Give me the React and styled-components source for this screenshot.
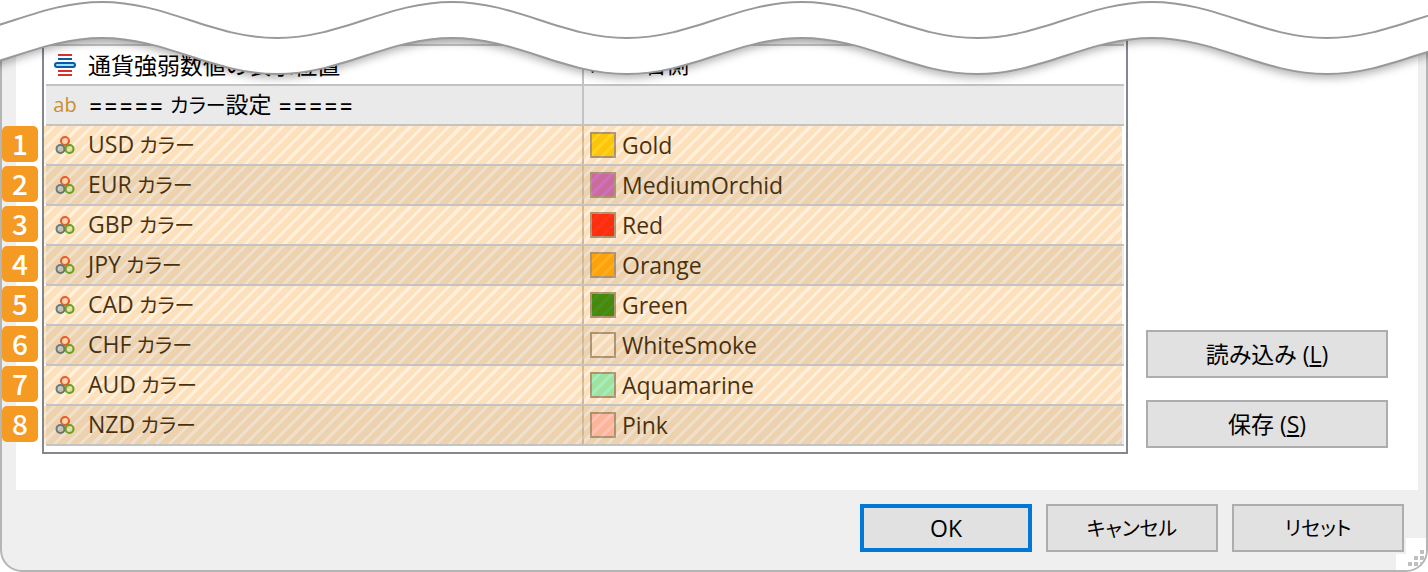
import React from 'react';
import styled, { createGlobalStyle, css } from 'styled-components';

const GlobalStyle = createGlobalStyle`
    *, *::before, *::after {
        box-sizing: border-box;
    }

    body {
        margin: 0;
        background: #fff;
        color: #000;
        font-family: 'Open Sans', 'Noto Sans CJK JP', sans-serif;
        font-size: 23px;
        line-height: 32px;
        font-feature-settings: 'palt';
    }
`;

const Dialog = styled.main`
    position: relative;
    overflow: hidden;
    border: 2px solid #b5b5b5;
    border-top: 0;
    border-radius: 0 0 22px 22px;
    background: #efefef;
`;

const Panel = styled.section`
    display: flex;
    gap: 18px;
    margin: 0 8px 0 14px;
    padding: 0 30px 36px 26px;
    background: #fff;
`;

const ListBox = styled.div`
    flex: 1;
    min-width: 0;
    padding: 0 2px 6px;
    border: 2px solid #828790;
    border-top: 0;
`;

const ListTop = styled.div`
    height: 46px;
    border-bottom: 2px solid #c3c3c3;
    background: #eaeaea;
`;

const Table = styled.table`
    width: 100%;
    table-layout: fixed;
    border-spacing: 0;
`;

const hatch = css`
    &::after {
        content: '';
        position: absolute;
        inset: 0 -2px 0 -2px;
        background: repeating-linear-gradient(
            135deg,
            rgba(245, 154, 35, 0.3) 0 6px,
            rgba(250, 195, 119, 0.26) 6px 9px
        );
        pointer-events: none;
    }

    &:last-child::after {
        inset: 0 2px 0 0;
    }
`;

const Cell = styled.td`
    position: relative;
    height: 40px;
    padding: 0 0 0 6px;
    border-bottom: 2px solid #c3c3c3;
    white-space: nowrap;
`;

const NameCell = styled(Cell)`
    width: 538px;
    border-right: 2px solid #c3c3c3;
`;

const Row = styled.tr`
    background: ${({ $shaded }) => ($shaded ? '#eaeaea' : '#fff')};

    ${Cell} {
        ${({ $marked }) => $marked && hatch}
    }
`;

const CellContent = styled.div`
    display: flex;
    align-items: center;
    gap: ${({ $gap }) => $gap}px;
    height: 38px;
`;

const Badge = styled.span`
    position: absolute;
    top: 0;
    left: -44px;
    z-index: 1;
    width: 36px;
    height: 36px;
    border-radius: 5px;
    background: #f59a23;
    color: #fff;
    font-family: 'Noto Sans CJK JP', sans-serif;
    font-size: 28px;
    font-weight: 500;
    line-height: 34px;
    text-align: center;
`;

const Kana = styled.span`
    font-size: 20px;
`;

const Equals = styled.span`
    font-family: Inter, sans-serif;
`;

const TypeIcon = styled.svg`
    flex: none;
    width: 26px;
    height: 26px;
`;

const TextTypeIcon = styled.span`
    width: 26px;
    color: #c8912e;
    font-size: 20px;
    line-height: 26px;
    text-align: center;
`;

const Swatch = styled.span`
    width: 26px;
    height: 26px;
    border: 2px solid #8e8e8e;
    background: ${({ $color }) => $color};
`;

const Side = styled.div`
    display: flex;
    flex-direction: column;
    justify-content: flex-end;
    gap: 22px;
    width: 242px;
    padding-bottom: 6px;
`;

const Button = styled.button`
    height: 48px;
    padding: 0;
    border: ${({ $primary }) => ($primary ? '4px solid #0078d7' : '2px solid #adadad')};
    background: #e1e1e1;
    color: #000;
    font: inherit;
    font-feature-settings: inherit;
`;

const Footer = styled.footer`
    display: flex;
    justify-content: flex-end;
    gap: 14px;
    padding: 14px 22px 18px;

    ${Button} {
        width: 172px;
    }
`;

const Grip = styled.svg`
    position: absolute;
    right: 0;
    bottom: 0;
    width: 30px;
    height: 32px;
`;

const Wave = styled.svg`
    position: absolute;
    top: 0;
    left: 0;
    z-index: 2;
    width: 100%;
    height: 100px;
    pointer-events: none;
`;

const WaveShadow = styled.g`
    filter: drop-shadow(0 4px 4px rgba(0, 0, 0, 0.3));
`;

const colors = [
    { code: 'USD', name: 'Gold', value: '#ffd700' },
    { code: 'EUR', name: 'MediumOrchid', value: '#ba55d3' },
    { code: 'GBP', name: 'Red', value: '#ff0000' },
    { code: 'JPY', name: 'Orange', value: '#ffa500' },
    { code: 'CAD', name: 'Green', value: '#008000' },
    { code: 'CHF', name: 'WhiteSmoke', value: '#f5f5f5' },
    { code: 'AUD', name: 'Aquamarine', value: '#7fffd4' },
    { code: 'NZD', name: 'Pink', value: '#ffc0cb' },
];

const wavePath = (y) => {
    let d = `M-73 ${y + 36}`;
    for (let x = -73; x < 1500; x += 350) {
        d += ` C${x + 65} ${y + 36} ${x + 110} ${y} ${x + 175} ${y}`;
        d += ` S${x + 285} ${y + 36} ${x + 350} ${y + 36}`;
    }
    return d;
};

const EnumIcon = () => (
    <TypeIcon viewBox="0 0 26 26" aria-hidden="true">
        <path d="M6 3h14M6 19h14M6 23h14" stroke="#d9302c" strokeWidth="2" />
        <path d="M6 7h14" stroke="#0a5aa5" strokeWidth="2" />
        <rect x="3" y="11" width="20" height="4" rx="2" fill="#9be4fb" stroke="#0a5aa5" strokeWidth="2" />
    </TypeIcon>
);

const ColorIcon = () => (
    <TypeIcon viewBox="0 0 26 26" aria-hidden="true">
        <circle cx="13" cy="9" r="4" fill="#fbd9cf" stroke="#e2401f" strokeWidth="2" />
        <circle cx="8.5" cy="17" r="4" fill="#b7cfe2" stroke="#2b6390" strokeWidth="2" />
        <circle cx="17.5" cy="17" r="4" fill="#d3f0c2" stroke="#2f9e1c" strokeWidth="2" />
    </TypeIcon>
);

const ColorRow = ({ index, code, name, value }) => (
    <Row $marked $shaded={index % 2 === 1}>
        <NameCell>
            <Badge>{index + 1}</Badge>
            <CellContent $gap={10}>
                <ColorIcon />
                <span>{code}<Kana> カラー</Kana></span>
            </CellContent>
        </NameCell>
        <Cell>
            <CellContent $gap={6}>
                <Swatch $color={value} />
                {name}
            </CellContent>
        </Cell>
    </Row>
);

const App = () => (
    <>
        <GlobalStyle />
        <Dialog>
            <Panel>
                <ListBox>
                    <ListTop />
                    <Table>
                        <tbody>
                            <Row>
                                <NameCell>
                                    <CellContent $gap={10}>
                                        <EnumIcon />
                                        通貨強弱数値の表示位置
                                    </CellContent>
                                </NameCell>
                                <Cell>
                                    <CellContent $gap={6}>
                                        <span><Kana>メイン</Kana>右側</span>
                                    </CellContent>
                                </Cell>
                            </Row>
                            <Row $shaded>
                                <NameCell>
                                    <CellContent $gap={10}>
                                        <TextTypeIcon>ab</TextTypeIcon>
                                        <span>
                                            <Equals>=====</Equals> <Kana>カラー</Kana>設定 <Equals>=====</Equals>
                                        </span>
                                    </CellContent>
                                </NameCell>
                                <Cell />
                            </Row>
                            {colors.map((color, index) => (
                                <ColorRow key={color.code} index={index} {...color} />
                            ))}
                        </tbody>
                    </Table>
                </ListBox>
                <Side>
                    <Button type="button">読み込み (<u>L</u>)</Button>
                    <Button type="button">保存 (<u>S</u>)</Button>
                </Side>
            </Panel>
            <Footer>
                <Button type="button" $primary>OK</Button>
                <Button type="button"><Kana>キャンセル</Kana></Button>
                <Button type="button"><Kana>リセット</Kana></Button>
            </Footer>
            <Grip viewBox="0 0 30 32" aria-hidden="true">
                <path d="M10 0h20v32H0V16h10z" fill="#fff" />
                <path d="M24 12h4v4h-4zM18 18h4v4h-4zM24 18h4v4h-4zM12 24h4v4h-4zM18 24h4v4h-4zM24 24h4v4h-4z" fill="#bfbfbf" />
            </Grip>
        </Dialog>
        <Wave viewBox="0 0 1428 100" preserveAspectRatio="none" aria-hidden="true">
            <WaveShadow>
                <path d={`${wavePath(38)} V-20 H-73z`} fill="#fff" />
            </WaveShadow>
            <path d={wavePath(38)} fill="none" stroke="#999" strokeWidth="2" />
            <path d={wavePath(2)} fill="none" stroke="#999" strokeWidth="2" />
        </Wave>
    </>
);

export default App;
